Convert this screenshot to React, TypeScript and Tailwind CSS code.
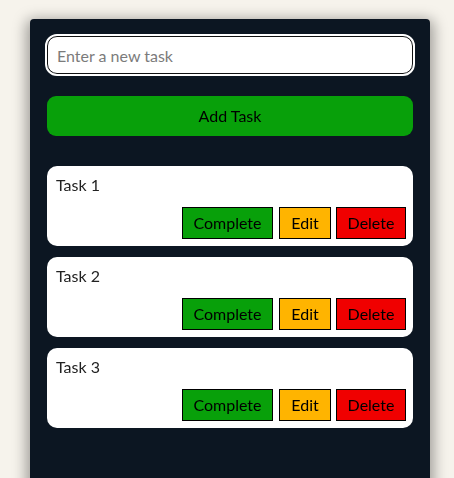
import { useState } from "react";

const font = { fontFamily: "Lato, 'Noto Sans', sans-serif" };

export default function App() {
  const [tasks] = useState(["Task 1", "Task 2", "Task 3"]);

  return (
    <div className="min-h-screen h-[478px] overflow-hidden bg-[#f6f3ec] pt-[19px] pl-[30px]" style={font}>
      <div className="w-[400px] h-[470px] bg-[#0c1622] rounded-[4px] shadow-[0_4px_14px_4px_rgba(0,0,0,0.35)] px-[15px] pt-[17px]">
        <input
          autoFocus
          placeholder="Enter a new task"
          className="block ml-[2px] w-[366px] h-[38px] rounded-[10px] bg-white border border-[#111] outline outline-2 outline-white px-[9px] text-[16px] text-black placeholder:text-[#7b7b7b]"
        />
        <button className="block mt-[22px] ml-[2px] w-[366px] h-[40px] rounded-[9px] bg-[#08a00a] text-[16px] text-black">
          Add Task
        </button>
        <div className="mt-[30px] ml-[2px] w-[366px] flex flex-col gap-[11px]">
          {tasks.map((t) => (
            <div key={t} className="h-[80px] bg-white rounded-[10px] px-[9px] pt-[7px] flex flex-col">
              <div className="text-[16px] leading-6 text-[#222]">{t}</div>
              <div className="mt-[10px] flex justify-end mr-[-2px]">
                <button className="w-[91px] h-[32px] border border-black bg-[#08a00a] text-[16px] text-black">Complete</button>
                <button className="ml-[6px] w-[52px] h-[32px] border border-black bg-[#ffb400] text-[16px] text-black">Edit</button>
                <button className="ml-[5px] w-[70px] h-[32px] border border-black bg-[#f00000] text-[16px] text-black">Delete</button>
              </div>
            </div>
          ))}
        </div>
      </div>
    </div>
  );
}
